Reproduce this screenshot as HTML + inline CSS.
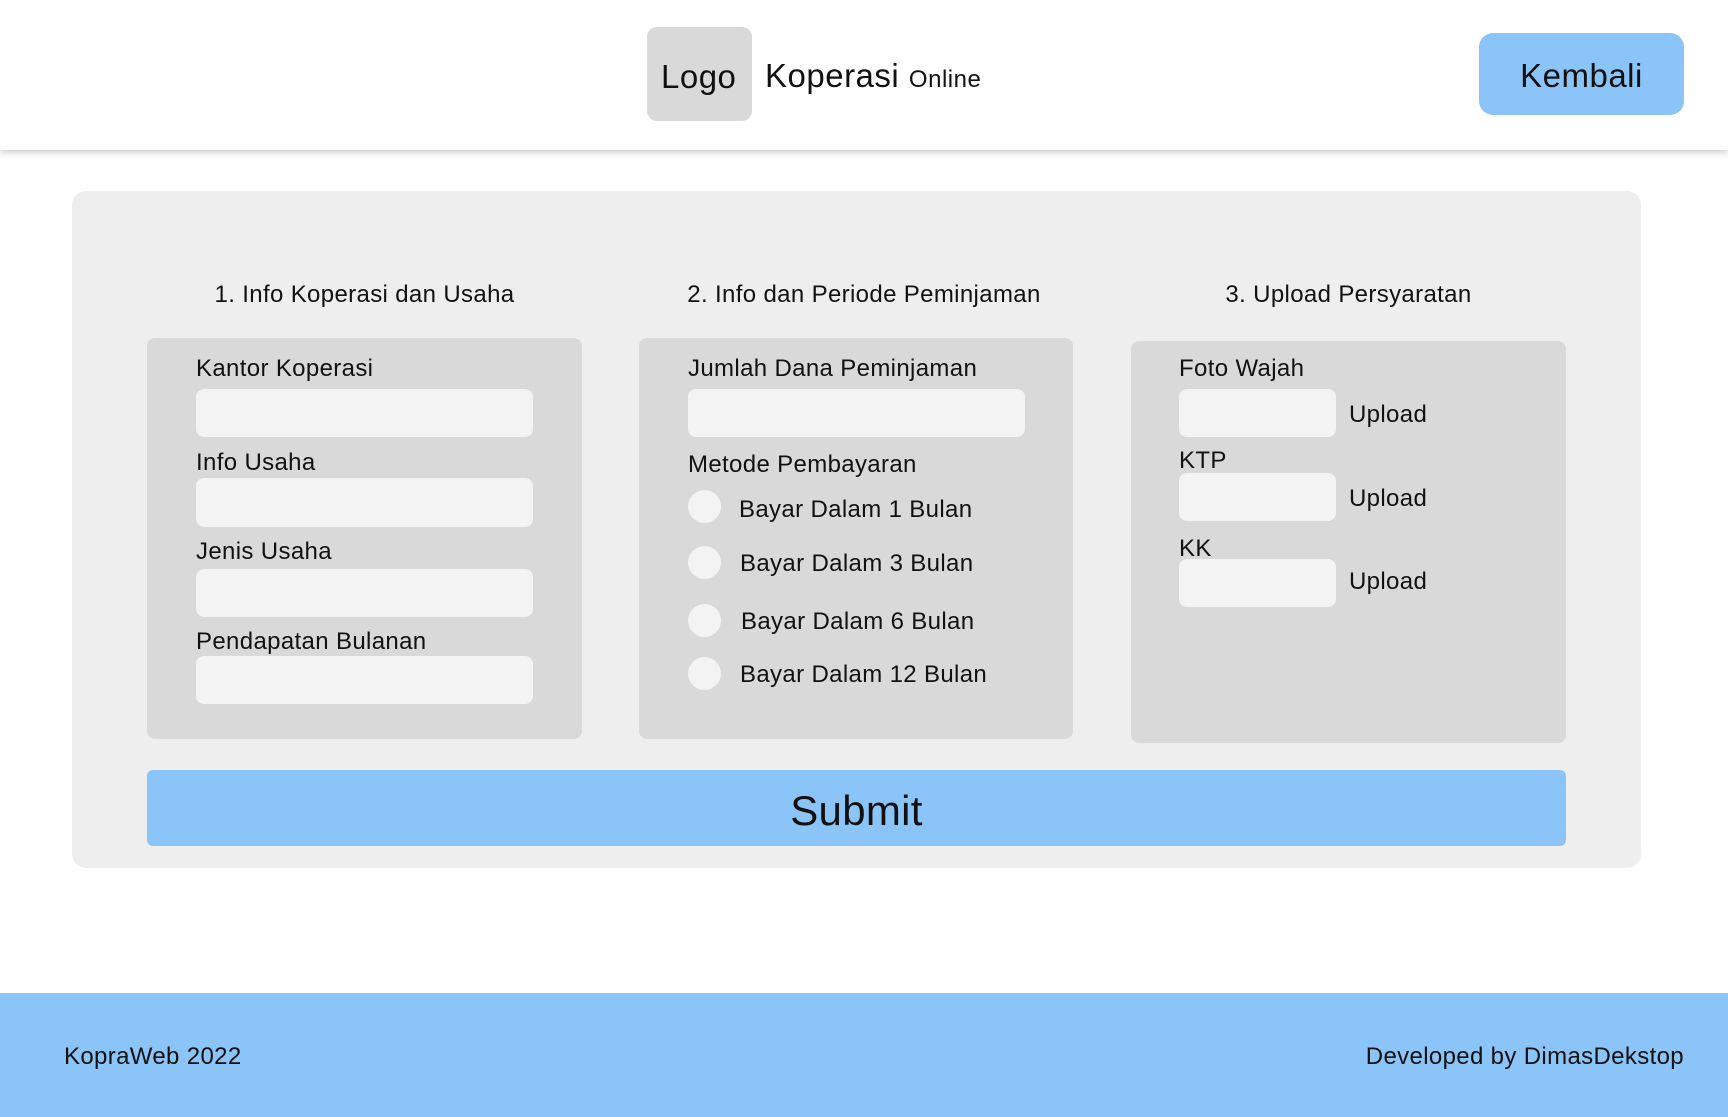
<!DOCTYPE html>
<html><head><meta charset="utf-8"><style>
*{margin:0;padding:0;box-sizing:border-box}
body{width:1728px;height:1117px;position:relative;background:#fff;font-family:"Liberation Sans",sans-serif;color:#111;overflow:hidden}
.a{position:absolute}
.t{position:absolute;font-size:24px;line-height:28px;white-space:nowrap;letter-spacing:0.35px;margin-top:2px}
.in{position:absolute;background:#f3f3f3;border-radius:8px}
.box{position:absolute;background:#d9d9d9;border-radius:8px}
.r{position:absolute;width:33px;height:33px;border-radius:50%;background:#f3f3f3}
</style></head><body>
<div class="a" style="left:0;top:0;width:1728px;height:150px;background:#fff;box-shadow:0 3px 6px rgba(0,0,0,0.18)"></div>
<div class="a" style="left:647px;top:27px;width:105px;height:94px;background:#d9d9d9;border-radius:10px"></div>
<div class="t" style="left:661px;top:56px;font-size:33px;line-height:38px;letter-spacing:0.5px">Logo</div>
<div class="t" style="left:765px;top:55px;font-size:33px;line-height:38px;letter-spacing:0.5px">Koperasi <span style="font-size:24px">Online</span></div>
<div class="a" style="left:1479px;top:33px;width:205px;height:82px;background:#8bc4f8;border-radius:14px"></div>
<div class="t" style="left:1479px;top:55px;width:205px;text-align:center;font-size:33px;line-height:38px;letter-spacing:0.5px">Kembali</div>

<div class="a" style="left:72px;top:191px;width:1569px;height:677px;background:#eeeeee;border-radius:14px"></div>
<div class="t" style="left:147px;top:279px;width:435px;text-align:center">1. Info Koperasi dan Usaha</div>
<div class="t" style="left:639px;top:279px;width:450px;text-align:center">2. Info dan Periode Peminjaman</div>
<div class="t" style="left:1131px;top:279px;width:435px;text-align:center">3. Upload Persyaratan</div>

<div class="box" style="left:147px;top:338px;width:435px;height:401px"></div>
<div class="t" style="left:196px;top:353px">Kantor Koperasi</div>
<div class="in" style="left:196px;top:389px;width:337px;height:48px"></div>
<div class="t" style="left:196px;top:447px">Info Usaha</div>
<div class="in" style="left:196px;top:478px;width:337px;height:49px"></div>
<div class="t" style="left:196px;top:536px">Jenis Usaha</div>
<div class="in" style="left:196px;top:569px;width:337px;height:48px"></div>
<div class="t" style="left:196px;top:626px">Pendapatan Bulanan</div>
<div class="in" style="left:196px;top:656px;width:337px;height:48px"></div>

<div class="box" style="left:639px;top:338px;width:434px;height:401px"></div>
<div class="t" style="left:688px;top:353px">Jumlah Dana Peminjaman</div>
<div class="in" style="left:688px;top:389px;width:337px;height:48px"></div>
<div class="t" style="left:688px;top:449px">Metode Pembayaran</div>
<div class="r" style="left:688px;top:490px"></div><div class="t" style="left:739px;top:494px">Bayar Dalam 1 Bulan</div>
<div class="r" style="left:688px;top:546px"></div><div class="t" style="left:740px;top:548px">Bayar Dalam 3 Bulan</div>
<div class="r" style="left:688px;top:604px"></div><div class="t" style="left:741px;top:606px">Bayar Dalam 6 Bulan</div>
<div class="r" style="left:688px;top:657px"></div><div class="t" style="left:740px;top:659px">Bayar Dalam 12 Bulan</div>

<div class="box" style="left:1131px;top:341px;width:435px;height:402px"></div>
<div class="t" style="left:1179px;top:353px">Foto Wajah</div>
<div class="in" style="left:1179px;top:389px;width:157px;height:48px"></div>
<div class="t" style="left:1349px;top:399px">Upload</div>
<div class="t" style="left:1179px;top:445px">KTP</div>
<div class="in" style="left:1179px;top:473px;width:157px;height:48px"></div>
<div class="t" style="left:1349px;top:483px">Upload</div>
<div class="t" style="left:1179px;top:533px">KK</div>
<div class="in" style="left:1179px;top:559px;width:157px;height:48px"></div>
<div class="t" style="left:1349px;top:566px">Upload</div>

<div class="a" style="left:147px;top:770px;width:1419px;height:76px;background:#8bc4f8;border-radius:6px"></div>
<div class="t" style="left:147px;top:785px;width:1419px;text-align:center;font-size:42px;line-height:48px;letter-spacing:0.3px">Submit</div>

<div class="a" style="left:0;top:993px;width:1728px;height:124px;background:#8bc4f8"></div>
<div class="t" style="left:64px;top:1041px">KopraWeb 2022</div>
<div class="t" style="right:44px;top:1041px">Developed by DimasDekstop</div>
</body></html>
